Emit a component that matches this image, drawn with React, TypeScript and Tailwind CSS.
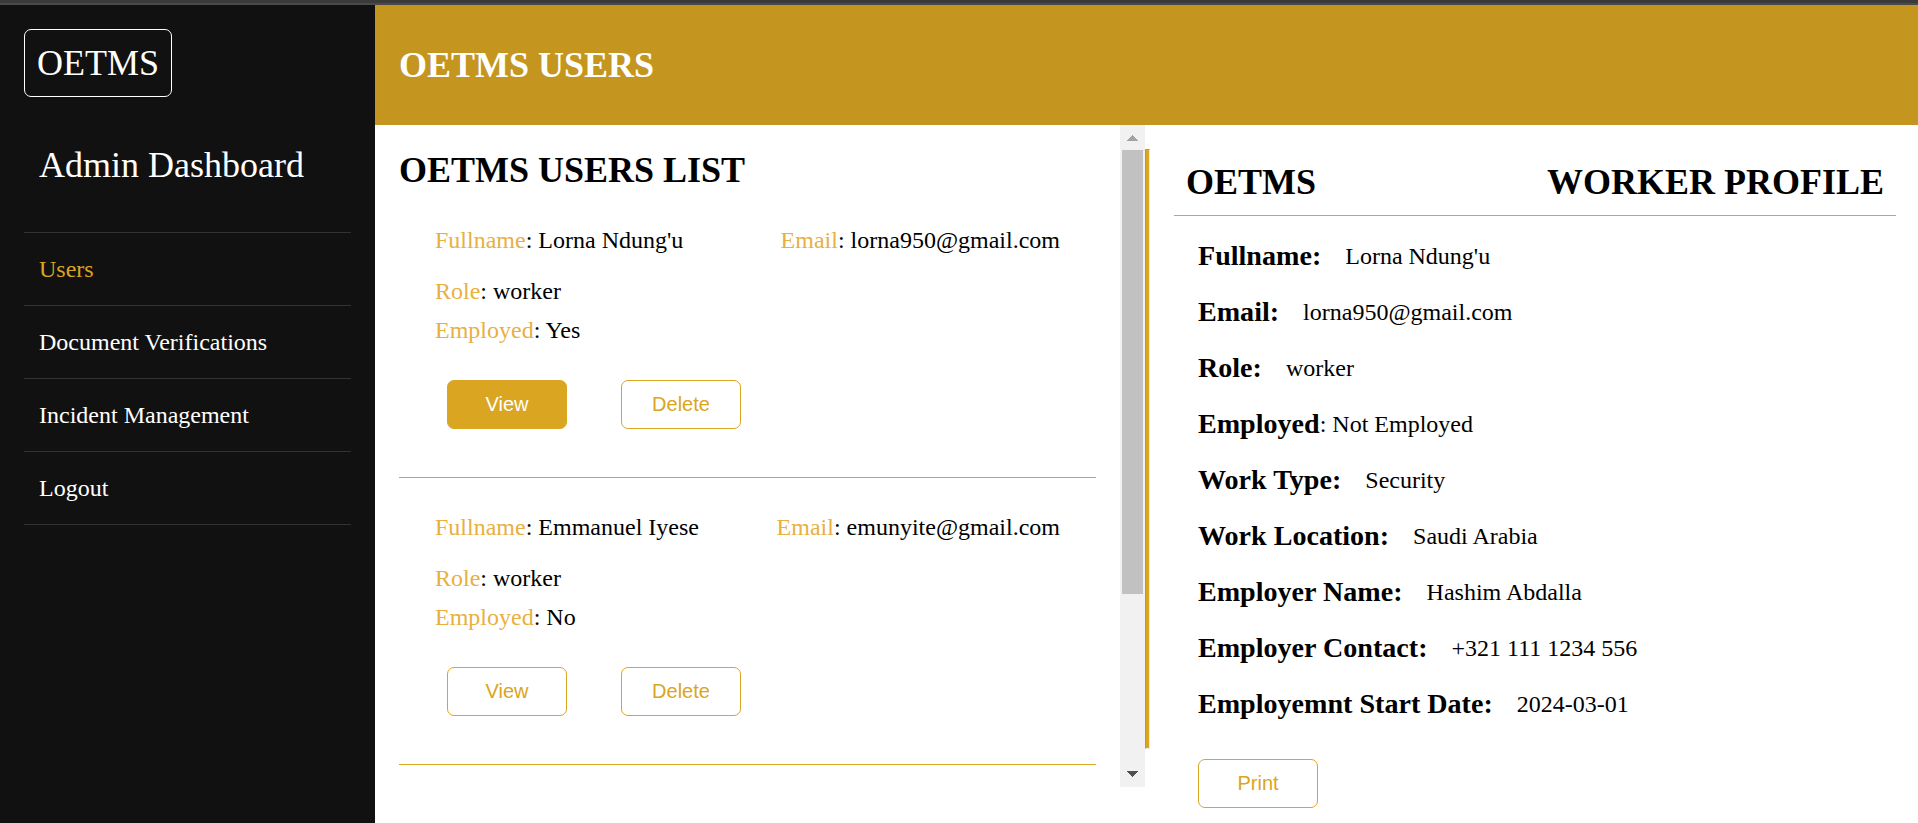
import React from "react";

const navItems = [
  { label: "Users", active: true },
  { label: "Document Verifications", active: false },
  { label: "Incident Management", active: false },
  { label: "Logout", active: false },
];

const users = [
  { name: "Lorna Ndung'u", email: "lorna950@gmail.com", role: "worker", employed: "Yes", selected: true },
  { name: "Emmanuel Iyese", email: "emunyite@gmail.com", role: "worker", employed: "No", selected: false },
];

const profile = [
  { label: "Fullname:", value: "Lorna Ndung'u" },
  { label: "Email:", value: "lorna950@gmail.com" },
  { label: "Role:", value: "worker" },
  { label: "Employed", value: ": Not Employed", inline: true },
  { label: "Work Type:", value: "Security" },
  { label: "Work Location:", value: "Saudi Arabia" },
  { label: "Employer Name:", value: "Hashim Abdalla" },
  { label: "Employer Contact:", value: "+321 111 1234 556" },
  { label: "Employemnt Start Date:", value: "2024-03-01" },
];

function Button({ children, filled = false }: { children: React.ReactNode; filled?: boolean }) {
  return (
    <button
      className={
        "h-[49px] w-[120px] rounded-[7px] border border-[#daa520] font-['Liberation_Sans',Arial,sans-serif] text-[20px] leading-[47px] " +
        (filled ? "bg-[#daa520] text-white" : "bg-white text-[#daa520]")
      }
    >
      {children}
    </button>
  );
}

function Field({ label, value }: { label: string; value: string }) {
  return (
    <p>
      <span className="text-[#e8b03f]">{label}</span>: {value}
    </p>
  );
}

function Sidebar() {
  return (
    <aside className="flex w-[375px] shrink-0 flex-col items-start bg-[#111111] px-6 pt-6 text-white">
      <div className="h-[68px] rounded-[7px] border border-white px-3 text-[36px] leading-[67px]">OETMS</div>
      <h2 className="mt-[46px] pl-[15px] text-[36px] leading-[44px]">Admin Dashboard</h2>
      <nav className="mt-[45px] w-[327px] border-t border-[#333333]">
        {navItems.map((item) => (
          <a
            key={item.label}
            className={
              "block h-[73px] border-b border-[#333333] pl-[15px] text-[24px] leading-[73px] " +
              (item.active ? "text-[#daa520]" : "text-white")
            }
          >
            {item.label}
          </a>
        ))}
      </nav>
    </aside>
  );
}

function UserList() {
  return (
    <section className="w-[745px] px-6 pt-6">
      <h2 className="text-[36px] font-bold leading-[42px]">OETMS USERS LIST</h2>
      {users.map((user) => (
        <div key={user.name} className="border-b border-[#daa520] px-9 pb-12 pt-9 text-[24px] leading-[27px]">
          <div className="flex justify-between">
            <Field label="Fullname" value={user.name} />
            <Field label="Email" value={user.email} />
          </div>
          <div className="mt-6 flex flex-col gap-3">
            <Field label="Role" value={user.role} />
            <Field label="Employed" value={user.employed} />
          </div>
          <div className="mt-9 flex gap-[54px] pl-3">
            <Button filled={user.selected}>View</Button>
            <Button>Delete</Button>
          </div>
        </div>
      ))}
    </section>
  );
}

function ScrollBar() {
  return (
    <div className="flex h-[662px] w-[25px] shrink-0 flex-col items-center bg-[#f1f1f1]">
      <svg className="h-[25px] w-[25px]" viewBox="0 0 25 25" shapeRendering="crispEdges">
        <path d="M7 16h11l-5.5-6z" fill="#a3a3a3" />
      </svg>
      <div className="h-[444px] w-[21px] bg-[#c1c1c1]" />
      <svg className="mt-auto h-[25px] w-[25px]" viewBox="0 0 25 25" shapeRendering="crispEdges">
        <path d="M7 9h11l-5.5 6z" fill="#505050" />
      </svg>
    </div>
  );
}

function Profile() {
  return (
    <section className="ml-6 w-[722px] pt-6">
      <header className="flex h-[67px] items-center justify-between border-b border-[#daa520] px-3 text-[36px] font-bold leading-[66px]">
        <h2>OETMS</h2>
        <h2>WORKER PROFILE</h2>
      </header>
      <div className="pl-6 pt-3">
        {profile.map((row) => (
          <div key={row.label} className={"flex h-14 items-center leading-[56px] " + (row.inline ? "" : "gap-6")}>
            <span className="text-[28.08px] font-bold">{row.label}</span>
            <span className="text-[24px]">{row.value}</span>
          </div>
        ))}
        <div className="mt-[27px]">
          <Button>Print</Button>
        </div>
      </div>
    </section>
  );
}

export default function App() {
  return (
    <div className="flex h-[823px] w-[1918px] flex-col overflow-hidden bg-white font-['Liberation_Serif','Times_New_Roman',serif] text-black">
      <div className="h-[5px] shrink-0 border-b-2 border-[#4a4a4a] bg-[#3b3b3b]" />
      <div className="flex min-h-0 flex-1">
        <Sidebar />
        <div className="flex-1">
          <header className="h-[120px] bg-[#c4961f] pl-6 text-[36px] font-bold leading-[120px] text-white">
            OETMS USERS
          </header>
          <main className="flex items-start">
            <UserList />
            <ScrollBar />
            <div className="mt-6 h-[600px] w-[5px] border border-b-[#eeeeee] border-l-[#9a9a9a] border-r-[#eeeeee] border-t-[#9a9a9a] bg-[#daa520]" />
            <Profile />
          </main>
        </div>
      </div>
    </div>
  );
}
